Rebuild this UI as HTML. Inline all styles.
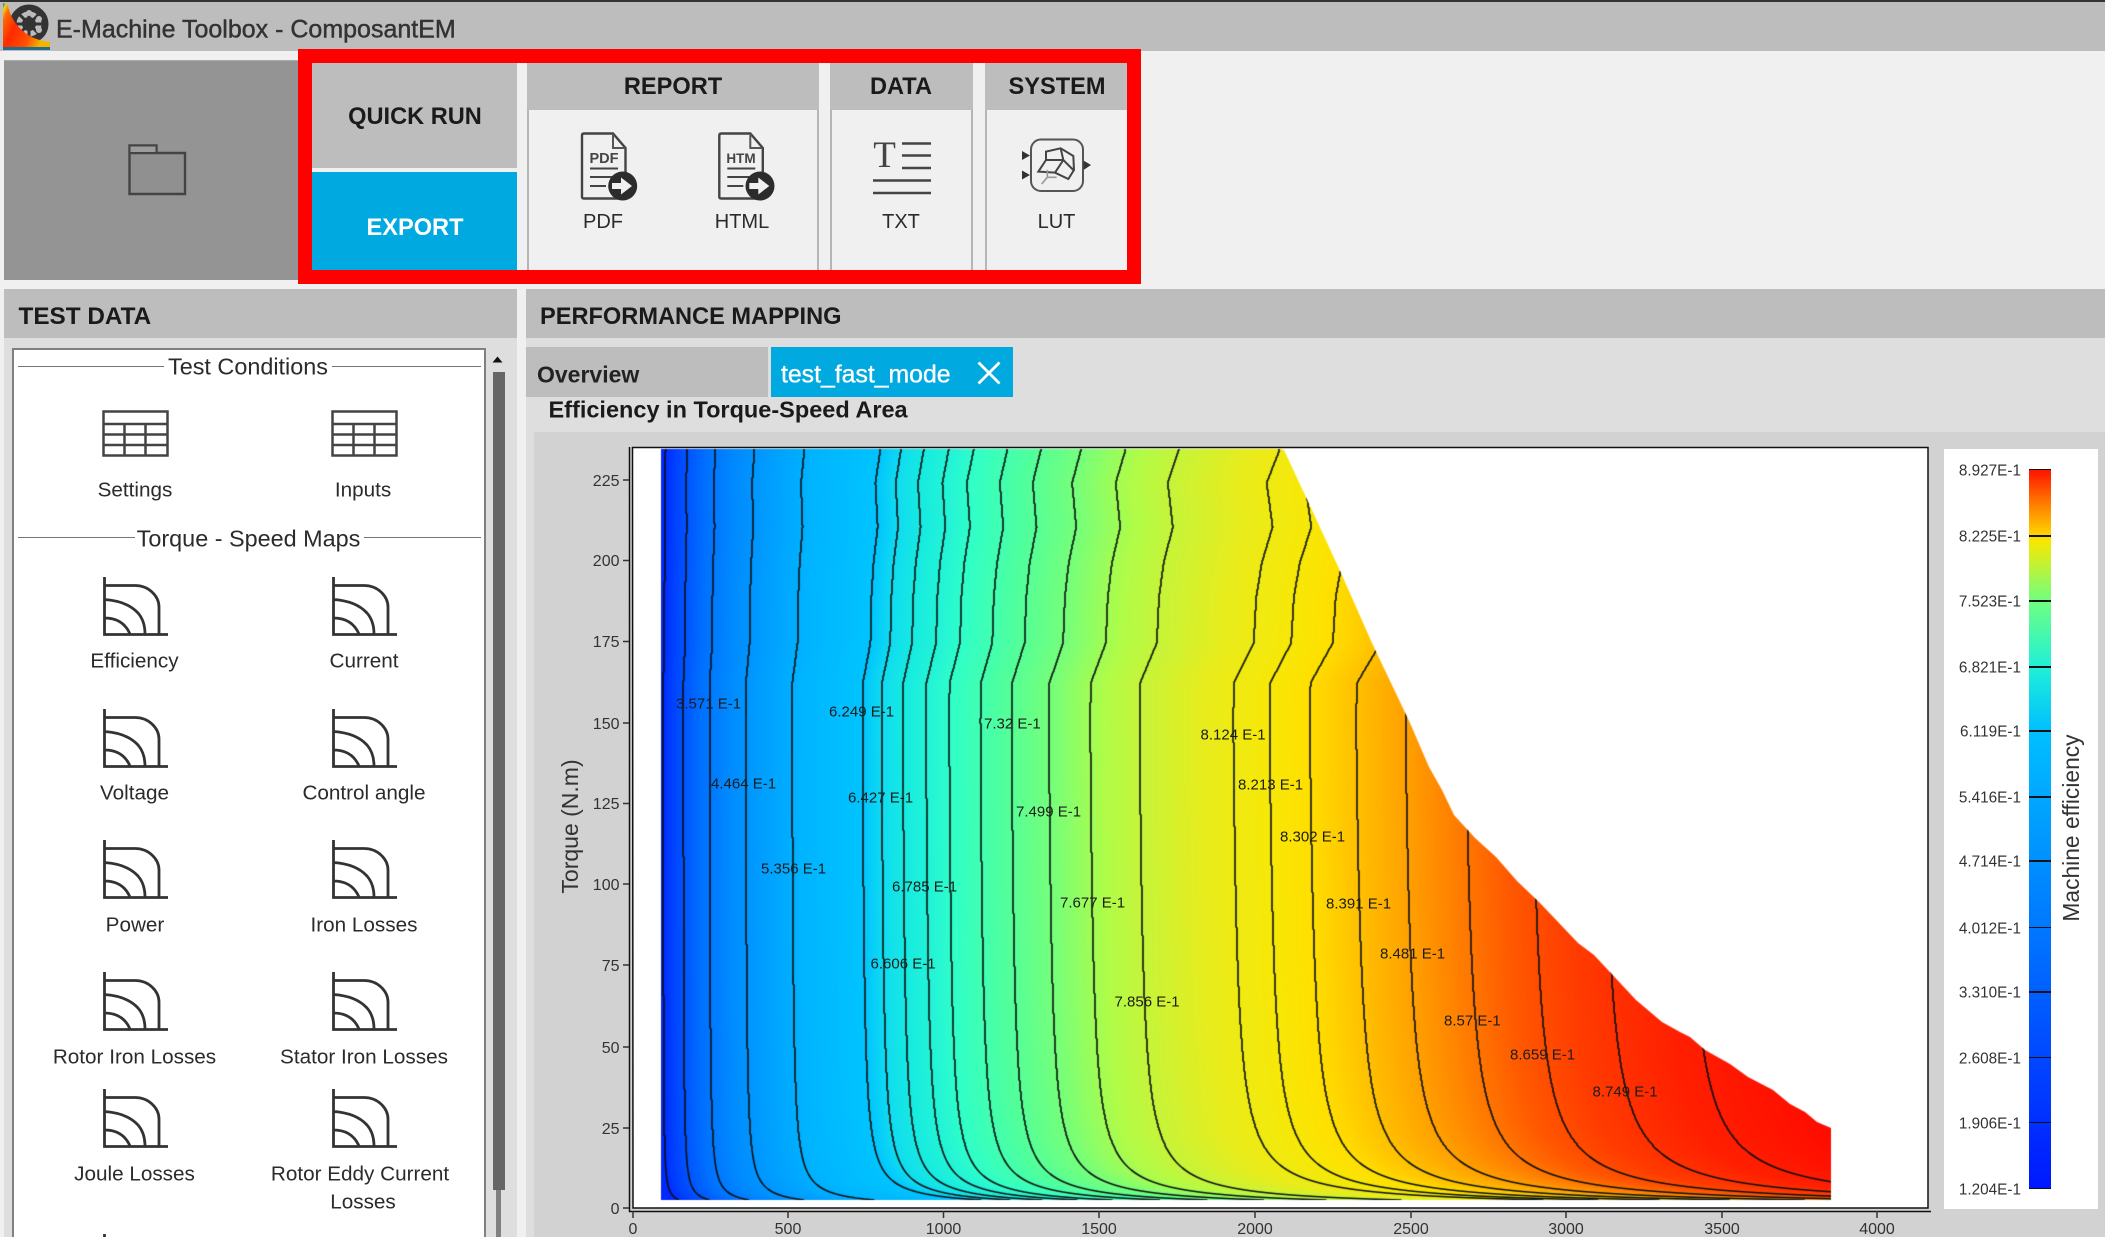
<!DOCTYPE html>
<html lang="en"><head><meta charset="utf-8"><title>E-Machine Toolbox - ComposantEM</title>
<style>
html,body{margin:0;padding:0;width:2105px;height:1237px;overflow:hidden;background:#f0f0f0;font-family:"Liberation Sans",sans-serif;color:#333}
#w{position:relative;width:2105px;height:1237px;overflow:hidden;background:#f0f0f0}
.b{position:absolute}
.t{position:absolute;white-space:nowrap;transform:translate(-50%,-50%);line-height:1}
.l{position:absolute;white-space:nowrap;transform:translateY(-50%);line-height:1}
.h{font-weight:bold;font-size:23.6px;color:#1a1a1a}
.i{font-size:20.7px;color:#2b2b2b;margin-top:1.2px}
.s{font-size:23.4px;color:#2b2b2b}
.tool{font-size:20px;color:#2b2b2b;margin-top:-.7px}
.c{font-size:15px;color:#1c1c1c;position:absolute;white-space:nowrap;line-height:15px;transform:translateY(-50%);margin-top:.8px}
.yt{position:absolute;font-size:16px;color:#333;right:1485.5px;line-height:16px;transform:translateY(-50%);margin-top:1px}
.xt{position:absolute;font-size:16px;color:#333;top:1221.5px;line-height:16px;transform:translateX(-50%)}
.cb{position:absolute;font-size:15.3px;color:#333;right:84px;line-height:15px;transform:translateY(-50%)}
.tk{position:absolute;left:2029px;width:22px;height:1.5px;background:#111}
.bd{position:absolute;background:#f0f0f0;border-left:2px solid #b5b5b5;border-right:2px solid #b5b5b5;box-sizing:border-box}
svg.a{position:absolute;left:0;top:0;overflow:visible}
</style></head><body><div id="w">
<svg width="0" height="0" style="position:absolute"><defs>
<symbol id="map" viewBox="0 0 66 60" overflow="visible"><path d="M1.5 -1V56.5H65M1.5 7.5H32Q42 7.5 49 14Q56 20.500 56 29V56M1.500 21.500Q24 23 35 35Q42 43 42 56M1.500 40Q20 40 27 56" fill="none" stroke="#333" stroke-width="2.800"/></symbol>
<symbol id="tab" viewBox="0 0 67 47" overflow="visible"><path d="M1.500 1.500H65.500V45.500H1.500ZM1.500 14H65.500M1.500 24.500H65.500M1.500 35H65.500M22.500 14V45.500M43.500 14V45.500" fill="none" stroke="#444" stroke-width="2.500"/></symbol>
</defs></svg>

<!-- title bar -->
<div class="b" style="left:0;top:0;width:2105px;height:51px;background:#bdbdbd;border-top:2px solid #333;box-sizing:border-box"></div>
<svg class="a" width="60" height="55" viewBox="0 0 60 55">
<circle cx="29" cy="24" r="16" fill="none" stroke="#333" stroke-width="7"/>
<circle cx="29" cy="24" r="7" fill="#333"/>
<path d="M29 8V40M13 24H45M18 13L40 35M40 13L18 35" stroke="#333" stroke-width="3"/>
<circle cx="29" cy="13" r="3" fill="#bbb"/><circle cx="39" cy="19" r="3" fill="#bbb"/><circle cx="39" cy="30" r="3" fill="#bbb"/>
<defs><linearGradient id="lg" x1="0" x2="1" y1="0" y2=".45"><stop offset="0" stop-color="#0a62c8"/><stop offset=".06" stop-color="#e8d820"/><stop offset=".15" stop-color="#ff6a00"/><stop offset=".4" stop-color="#ff2a00"/><stop offset=".75" stop-color="#ff5000"/><stop offset="1" stop-color="#f4b400"/></linearGradient></defs>
<path d="M3 3.500H7.500C10 18 18 29 30 36C37 40 44 41 50 42V47H3Z" fill="url(#lg)"/>
<path d="M3 47H50V50H3Z" fill="#1f6c8c"/>
</svg>
<div class="l" style="left:56px;top:29.500px;font-size:25px;color:#333;-webkit-text-stroke:.45px #333">E-Machine Toolbox - ComposantEM</div>

<!-- folder -->
<div class="b" style="left:4px;top:60px;width:300px;height:219px;background:#949494;border-top:1px solid #aaa"></div>
<svg class="a" width="200" height="200" viewBox="0 0 200 200"><path d="M129.500 153H185V194H129.500ZM129.500 153V145.500H156.500V153" fill="#909090" stroke="#444" stroke-width="2.400"/><path d="M130.500 146.500H155.500V152H130.500Z" fill="#9c9c9c"/></svg>

<!-- toolbar -->
<div class="b" style="left:298px;top:49px;width:843px;height:235px;background:#f00"></div>
<div class="b" style="left:312px;top:63px;width:815px;height:207px;background:#f0f0f0"></div>
<div class="b" style="left:312px;top:63px;width:205px;height:105px;background:#bdbdbd"></div>
<div class="b" style="left:312px;top:172px;width:205px;height:98px;background:#00a9e0"></div>
<div class="t h" style="left:415px;top:118px;">QUICK RUN</div>
<div class="t h" style="left:415px;top:228.500px;color:#fff">EXPORT</div>

<div class="b" style="left:527px;top:63px;width:292px;height:47px;background:#bdbdbd"></div>
<div class="bd" style="left:527px;top:110px;width:292px;height:160px"></div>
<div class="b" style="left:829.500px;top:63px;width:143.500px;height:47px;background:#bdbdbd"></div>
<div class="bd" style="left:829.500px;top:110px;width:143.500px;height:160px"></div>
<div class="b" style="left:984.500px;top:63px;width:142.500px;height:47px;background:#bdbdbd"></div>
<div class="bd" style="left:984.500px;top:110px;width:142.500px;height:160px;border-right:0"></div>
<div class="t h" style="left:673px;top:87.500px">REPORT</div>
<div class="t h" style="left:901px;top:87.500px">DATA</div>
<div class="t h" style="left:1057px;top:87.500px">SYSTEM</div>

<svg class="a" width="1140" height="280" viewBox="0 0 1140 280">
<g id="pdf">
<path d="M582 135.500Q582 133.500 584 133.500H613L625.500 148V197Q625.500 198.500 624 198.500H584Q582 198.500 582 197Z" fill="none" stroke="#444" stroke-width="2.400"/>
<path d="M613 134V148H625" fill="none" stroke="#555" stroke-width="2"/>
<text x="604" y="163" font-size="14.500" font-weight="bold" text-anchor="middle" fill="#444" font-family="Liberation Sans">PDF</text>
<path d="M590 168.500H618M590 177H612M590 186H606" stroke="#444" stroke-width="2"/>
<circle cx="622.700" cy="186" r="14.500" fill="#2c2c2c"/>
<path d="M612 183H621V177.500L632 186L621 194.500V189H612Z" fill="#f0f0f0"/>
</g>
<g>
<path d="M719.300 135.500Q719.300 133.500 721.300 133.500H750.300L762.800 148V197Q762.800 198.500 761.300 198.500H721.300Q719.300 198.500 719.300 197Z" fill="none" stroke="#444" stroke-width="2.400"/>
<path d="M750.300 134V148H762.300" fill="none" stroke="#555" stroke-width="2"/>
<text x="741" y="163" font-size="13.500" font-weight="bold" text-anchor="middle" fill="#444" font-family="Liberation Sans">HTM</text>
<path d="M727.300 168.500H755.300M727.300 177H749.300M727.300 186H743.300" stroke="#444" stroke-width="2"/>
<circle cx="760" cy="186" r="14.500" fill="#2c2c2c"/>
<path d="M749.300 183H758.300V177.500L769.300 186L758.300 194.500V189H749.300Z" fill="#f0f0f0"/>
</g>
<text x="884.500" y="167" font-size="37" text-anchor="middle" fill="#444" font-family="Liberation Serif">T</text>
<path d="M902 143.500H931M902 155.500H931M902 168H931M873 180.500H931M873 193H931" stroke="#444" stroke-width="2.600"/>
<rect x="1031" y="139.500" width="52" height="51.500" rx="10" fill="none" stroke="#555" stroke-width="2"/>
<path d="M1022 151V160L1030 155.500ZM1022 170.500V179.500L1030 175ZM1083.500 160.500V170L1091 165Z" fill="#333"/>
<g transform="translate(960 100) scale(.3333)" fill="none" stroke="#444" stroke-width="6"><path d="M258 155L302 145L340 168L342 210L325 237L285 218L235 215L258 180ZM258 155V180H310L340 210M302 145L310 180L285 218"/><path d="M262 210V232L245 252M262 232H290" stroke="#999" stroke-width="5"/></g>
</svg>
<div class="t tool" style="left:603px;top:222.500px">PDF</div>
<div class="t tool" style="left:742px;top:222.500px">HTML</div>
<div class="t tool" style="left:901px;top:222.500px">TXT</div>
<div class="t tool" style="left:1056.500px;top:222.500px">LUT</div>

<!-- left panel -->
<div class="b" style="left:4px;top:289px;width:513px;height:49px;background:#bdbdbd"></div>
<div class="b" style="left:4px;top:338px;width:513px;height:899px;background:#dedede"></div>
<div class="l h" style="left:18.500px;top:316.500px;font-size:24.300px">TEST DATA</div>
<div class="b" style="left:12px;top:348px;width:474px;height:900px;background:#fff;border:2.500px solid #808080;box-sizing:border-box"></div>
<div class="b" style="left:18px;top:365.500px;width:146px;height:1.500px;background:#777"></div>
<div class="b" style="left:332px;top:365.500px;width:149px;height:1.500px;background:#777"></div>
<div class="b" style="left:18px;top:536.500px;width:117px;height:1.500px;background:#777"></div>
<div class="b" style="left:364px;top:536.500px;width:117px;height:1.500px;background:#777"></div>
<div class="t s" style="left:248px;top:367px">Test Conditions</div>
<div class="t s" style="left:248.500px;top:539px">Torque - Speed Maps</div>

<svg class="b" style="left:102px;top:410px" width="67" height="47"><use href="#tab"/></svg>
<svg class="b" style="left:330.500px;top:410px" width="67" height="47"><use href="#tab"/></svg>
<svg class="b" style="left:103px;top:577.500px;overflow:visible" width="66" height="60"><use href="#map"/></svg>
<svg class="b" style="left:331.500px;top:577.500px;overflow:visible" width="66" height="60"><use href="#map"/></svg>
<svg class="b" style="left:103px;top:709.500px;overflow:visible" width="66" height="60"><use href="#map"/></svg>
<svg class="b" style="left:331.500px;top:709.500px;overflow:visible" width="66" height="60"><use href="#map"/></svg>
<svg class="b" style="left:103px;top:840.500px;overflow:visible" width="66" height="60"><use href="#map"/></svg>
<svg class="b" style="left:331.500px;top:840.500px;overflow:visible" width="66" height="60"><use href="#map"/></svg>
<svg class="b" style="left:103px;top:972.500px;overflow:visible" width="66" height="60"><use href="#map"/></svg>
<svg class="b" style="left:331.500px;top:972.500px;overflow:visible" width="66" height="60"><use href="#map"/></svg>
<svg class="b" style="left:103px;top:1089.500px;overflow:visible" width="66" height="60"><use href="#map"/></svg>
<svg class="b" style="left:331.500px;top:1089.500px;overflow:visible" width="66" height="60"><use href="#map"/></svg>
<svg class="b" style="left:103px;top:1235px;overflow:visible" width="66" height="60"><use href="#map"/></svg>

<div class="t i" style="left:135px;top:490px">Settings</div>
<div class="t i" style="left:363px;top:490px">Inputs</div>
<div class="t i" style="left:134.500px;top:661px">Efficiency</div>
<div class="t i" style="left:364px;top:661px">Current</div>
<div class="t i" style="left:134.500px;top:793px">Voltage</div>
<div class="t i" style="left:364px;top:793px">Control angle</div>
<div class="t i" style="left:135px;top:925px">Power</div>
<div class="t i" style="left:364px;top:925px">Iron Losses</div>
<div class="t i" style="left:134.500px;top:1057px">Rotor Iron Losses</div>
<div class="t i" style="left:364px;top:1057px">Stator Iron Losses</div>
<div class="t i" style="left:134.500px;top:1174px">Joule Losses</div>
<div class="t i" style="left:360px;top:1174px">Rotor Eddy Current</div>
<div class="t i" style="left:363px;top:1202px">Losses</div>

<div class="b" style="left:496px;top:1190px;width:5px;height:47px;background:#808080"></div>
<div class="b" style="left:493px;top:372px;width:11.500px;height:818px;background:#666"></div>
<svg class="a" width="520" height="380"><path d="M492.500 362.500L497.500 356.500L502.500 362.500Z" fill="#111"/></svg>

<!-- right panel -->
<div class="b" style="left:526px;top:289px;width:1579px;height:49px;background:#bdbdbd"></div>
<div class="b" style="left:526px;top:338px;width:1579px;height:899px;background:#dedede"></div>
<div class="l h" style="left:540px;top:317.500px">PERFORMANCE MAPPING</div>
<div class="b" style="left:526px;top:347px;width:242px;height:50px;background:#bdbdbd"></div>
<div class="b" style="left:771px;top:347px;width:242px;height:50px;background:#00a9e0"></div>
<div class="l" style="left:537px;top:375px;font-size:23px;font-weight:bold;color:#222">Overview</div>
<div class="l" style="left:781px;top:375.500px;font-size:24.800px;color:#fff;-webkit-text-stroke:.35px #fff">test_fast_mode</div>
<svg class="a" width="1020" height="400"><path d="M978.500 362.500L999.500 383.500M999.500 362.500L978.500 383.500" stroke="#fff" stroke-width="2.800"/></svg>
<div class="l" style="left:548.500px;top:409.500px;font-size:23.500px;font-weight:bold;color:#1a1a1a">Efficiency in Torque-Speed Area</div>

<div class="b" style="left:534px;top:432px;width:1571px;height:805px;background:#d2d2d2"></div>
<div class="b" style="left:633px;top:447px;width:1295px;height:761px;background:#fff"></div>
<canvas id="hm" width="1300" height="770" class="b" style="left:633px;top:447px"></canvas>
<svg class="a" width="2105" height="1237" viewBox="0 0 2105 1237" style="pointer-events:none">
<path d="M632.500 447.500H1928V1208H633ZM629.500 447V1211.500H1931" fill="none" stroke="#111" stroke-width="1.500"/>
<path d="M623 480H629M623 560.500H629M623 641.500H629M623 723H629M623 803.500H629M623 884H629M623 965H629M623 1047H629M623 1128H629M623 1208H629M633 1211V1218M788 1211V1218M943.500 1211V1218M1099 1211V1218M1255 1211V1218M1411 1211V1218M1566 1211V1218M1722 1211V1218M1877 1211V1218" stroke="#333" stroke-width="1.500"/>
<text x="0" y="0" transform="translate(578 826.500) rotate(-90)" font-size="23" text-anchor="middle" fill="#333" font-family="Liberation Sans">Torque (N.m)</text>
</svg>

<div class="yt" style="top:481px">225</div>
<div class="yt" style="top:561px">200</div>
<div class="yt" style="top:642px">175</div>
<div class="yt" style="top:724px">150</div>
<div class="yt" style="top:804px">125</div>
<div class="yt" style="top:885px">100</div>
<div class="yt" style="top:966px">75</div>
<div class="yt" style="top:1048px">50</div>
<div class="yt" style="top:1129px">25</div>
<div class="yt" style="top:1209px">0</div>
<div class="xt" style="left:633px">0</div>
<div class="xt" style="left:788px">500</div>
<div class="xt" style="left:943.500px">1000</div>
<div class="xt" style="left:1099px">1500</div>
<div class="xt" style="left:1255px">2000</div>
<div class="xt" style="left:1411px">2500</div>
<div class="xt" style="left:1566px">3000</div>
<div class="xt" style="left:1722px">3500</div>
<div class="xt" style="left:1877px">4000</div>

<div class="c" style="left:676px;top:703px">3.571 E-1</div>
<div class="c" style="left:829px;top:711px">6.249 E-1</div>
<div class="c" style="left:984px;top:723px">7.32 E-1</div>
<div class="c" style="left:711px;top:783px">4.464 E-1</div>
<div class="c" style="left:848px;top:797px">6.427 E-1</div>
<div class="c" style="left:1016px;top:811px">7.499 E-1</div>
<div class="c" style="left:761px;top:868px">5.356 E-1</div>
<div class="c" style="left:892px;top:886px">6.785 E-1</div>
<div class="c" style="left:1060px;top:902px">7.677 E-1</div>
<div class="c" style="left:870.500px;top:963px">6.606 E-1</div>
<div class="c" style="left:1114.500px;top:1001px">7.856 E-1</div>
<div class="c" style="left:1200.500px;top:734px">8.124 E-1</div>
<div class="c" style="left:1238px;top:784px">8.213 E-1</div>
<div class="c" style="left:1280px;top:836px">8.302 E-1</div>
<div class="c" style="left:1326px;top:903px">8.391 E-1</div>
<div class="c" style="left:1380px;top:953px">8.481 E-1</div>
<div class="c" style="left:1444px;top:1020px">8.57 E-1</div>
<div class="c" style="left:1510px;top:1054px">8.659 E-1</div>
<div class="c" style="left:1592.500px;top:1091px">8.749 E-1</div>

<!-- colour bar -->
<div class="b" style="left:1944px;top:448.500px;width:154px;height:760px;background:#fff"></div>
<div class="b" style="left:2029px;top:469px;width:22px;height:719px;background:linear-gradient(to top,#0018ff 0%,#0030ff 9.3%,#0048ff 18.3%,#0060ff 27.4%,#0078ff 36.4%,#0090ff 45.500%,#00a8ff 54.500%,#00c0ff 63.700%,#20f0d8 72.500%,#70ff80 81.700%,#f8e800 90%,#ffd000 91%,#ff8000 95%,#ff1000 100%)"></div>
<div class="tk" style="top:468.500px"></div><div class="tk" style="top:535px"></div><div class="tk" style="top:600px"></div><div class="tk" style="top:666px"></div><div class="tk" style="top:730px"></div><div class="tk" style="top:796px"></div><div class="tk" style="top:860px"></div><div class="tk" style="top:926.500px"></div><div class="tk" style="top:991px"></div><div class="tk" style="top:1056.500px"></div><div class="tk" style="top:1121.500px"></div><div class="tk" style="top:1187.500px"></div>
<div class="cb" style="top:470.500px">8.927E-1</div>
<div class="cb" style="top:536.500px">8.225E-1</div>
<div class="cb" style="top:601.500px">7.523E-1</div>
<div class="cb" style="top:667.500px">6.821E-1</div>
<div class="cb" style="top:732px">6.119E-1</div>
<div class="cb" style="top:797.500px">5.416E-1</div>
<div class="cb" style="top:862px">4.714E-1</div>
<div class="cb" style="top:928.500px">4.012E-1</div>
<div class="cb" style="top:992.500px">3.310E-1</div>
<div class="cb" style="top:1058.500px">2.608E-1</div>
<div class="cb" style="top:1123.500px">1.906E-1</div>
<div class="cb" style="top:1189.500px">1.204E-1</div>
<svg class="a" width="2105" height="1237" viewBox="0 0 2105 1237" style="pointer-events:none"><text transform="translate(2079 828) rotate(-90)" font-size="22.800" text-anchor="middle" fill="#333" font-family="Liberation Sans">Machine efficiency</text></svg>

<script>
(function(){
var ox=633,oy=447,W=1300,H=770;
var cv=document.getElementById('hm'),ctx=cv.getContext('2d');
var gp=[[440,1],[450,1],[483,.73],[527,.85],[563,.62],[597,.5],[643,.44],[683,.02],[720,0],[3000,0]];
function g(y){for(var i=1;i<gp.length;i++){if(y<=gp[i][0]){var a=gp[i-1],b=gp[i];return a[1]+(b[1]-a[1])*(y-a[0])/(b[0]-a[0]);}}return 0;}
function s(y){var T=(1208-y)/3.235;return 1.08/(T+.4)*(1+1.2/(T+.5))+.08*g(y);}
var cm=[[661,0,40,255],[673,0,68,255],[700,0,112,255],[730,0,140,255],[770,0,164,255],[800,0,180,255],[830,0,188,255],[860,0,196,255],[880,16,220,240],[905,24,236,223],[930,37,245,213],[950,48,255,200],[1000,80,255,156],[1050,120,255,120],[1100,176,252,72],[1140,200,244,56],[1200,232,236,28],[1260,246,232,8],[1300,255,224,0],[1350,255,192,0],[1400,255,160,0],[1450,255,124,0],[1500,255,88,0],[1560,255,60,0],[1650,255,32,0],[1750,255,16,0],[1830,255,0,0]];
function col(b){if(b<=cm[0][0])return cm[0];for(var i=1;i<cm.length;i++){if(b<=cm[i][0]){var p=cm[i-1],q=cm[i],t=(b-p[0])/(q[0]-p[0]);return [0,p[1]+(q[1]-p[1])*t,p[2]+(q[2]-p[2])*t,p[3]+(q[3]-p[3])*t];}}return cm[cm.length-1];}
var off=document.createElement('canvas');off.width=W;off.height=H;var oc=off.getContext('2d');var im=oc.createImageData(W,H),d=im.data;
for(var py=0;py<H;py++){var y=py+oy,sv=y>=1204?s(1204):s(y);
 for(var px=0;px<W;px++){var x=px+ox,b=(x+633*sv)/(1+sv),c=col(b),k=(py*W+px)*4;d[k]=c[1];d[k+1]=c[2];d[k+2]=c[3];d[k+3]=255;}}
oc.putImageData(im,0,0);
var poly=[[661,449],[1281,449],[1284,450],[1312,510],[1341,573],[1372,643],[1410,723],[1429,767],[1442,790],[1454,815],[1475,838],[1496,857],[1517,881],[1540,903],[1578,943],[1594,955],[1636,1000],[1662,1022],[1680,1032],[1690,1037],[1705,1050],[1730,1064],[1748,1077],[1773,1090],[1790,1104],[1805,1112],[1817,1122],[1831,1128],[1831,1200],[661,1200]];
ctx.save();ctx.beginPath();poly.forEach(function(p,i){var X=p[0]-ox,Y=p[1]-oy;i?ctx.lineTo(X,Y):ctx.moveTo(X,Y);});ctx.closePath();ctx.clip();
ctx.drawImage(off,0,0);
var bs=[663,683,709,745,791,861,880,901,924,947,978,1009,1046,1087,1136,1229,1265,1305,1351,1400,1460,1526,1597,1680];
ctx.strokeStyle='#0a1010';ctx.lineWidth=1.6;ctx.lineJoin='round';
bs.forEach(function(b){ctx.beginPath();for(var y=449;y<=1200;y+=1){var X=b+(b-633)*s(y);X=y<1150?Math.round(X):X;X-=ox;var Y=y-oy;y==449?ctx.moveTo(X,Y):ctx.lineTo(X,Y);}ctx.stroke();});
ctx.restore();
})();
</script>
</div></body></html>
